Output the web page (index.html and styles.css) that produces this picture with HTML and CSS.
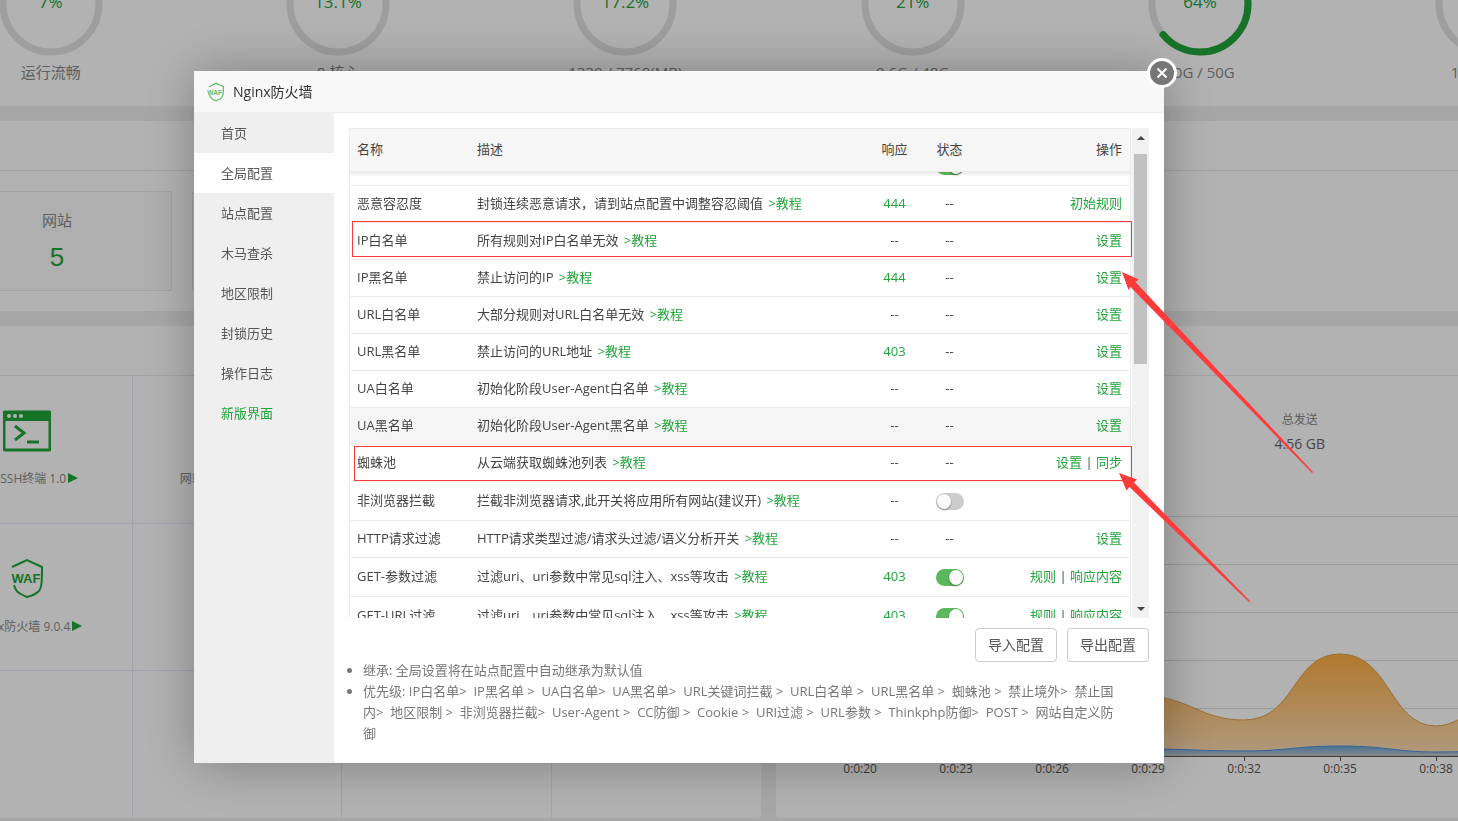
FILE: index.html
```html
<!DOCTYPE html>
<html lang="zh-CN">
<head>
    <meta charset="UTF-8">
    <meta name="viewport" content="width=device-width, initial-scale=1.0">
    <title>Nginx防火墙</title>
    <link rel="stylesheet" href="styles.css">
</head>
<body>
    <div class="dashboard">
        <section class="panel status">
            <div class="gauge">
                <div class="ring">
                    <svg viewBox="0 0 104 104"><circle class="track" cx="52" cy="52" r="48"/></svg>
                    <span>7%</span>
                </div>
                <p>运行流畅</p>
            </div>
            <div class="gauge">
                <div class="ring">
                    <svg viewBox="0 0 104 104"><circle class="track" cx="52" cy="52" r="48"/></svg>
                    <span>13.1%</span>
                </div>
                <p>8 核心</p>
            </div>
            <div class="gauge">
                <div class="ring">
                    <svg viewBox="0 0 104 104"><circle class="track" cx="52" cy="52" r="48"/></svg>
                    <span>17.2%</span>
                </div>
                <p>1339 / 7768(MB)</p>
            </div>
            <div class="gauge">
                <div class="ring">
                    <svg viewBox="0 0 104 104"><circle class="track" cx="52" cy="52" r="48"/></svg>
                    <span>21%</span>
                </div>
                <p>9.6G / 48G</p>
            </div>
            <div class="gauge">
                <div class="ring">
                    <svg viewBox="0 0 104 104">
                        <circle class="track" cx="52" cy="52" r="48"/>
                        <circle class="value" cx="52" cy="52" r="48" pathLength="100" stroke-dasharray="64 100" transform="rotate(-90 52 52)"/>
                    </svg>
                    <span>64%</span>
                </div>
                <p>30G / 50G</p>
            </div>
            <div class="gauge">
                <div class="ring">
                    <svg viewBox="0 0 104 104"><circle class="track" cx="52" cy="52" r="48"/></svg>
                    <span>1%</span>
                </div>
                <p>1.2G / 99G</p>
            </div>
        </section>

        <section class="panel">
            <div class="panel-head"></div>
            <div class="counts">
                <div class="count"><p>网站</p><a href="#">5</a></div>
                <div class="count"></div>
                <div class="count"></div>
                <div class="count"></div>
            </div>
        </section>

        <div class="columns">
            <section class="panel">
                <div class="panel-head"></div>
                <div class="soft-list">
                    <div class="soft">
                        <svg class="soft-icon" viewBox="0 0 48 48">
                            <rect x="1" y="5" width="46" height="38" rx="1" fill="none" stroke="#20a53a" stroke-width="3"/>
                            <path d="M0 4h48v10H0z" fill="#20a53a"/>
                            <circle cx="6" cy="9" r="2" fill="#fff"/>
                            <circle cx="12" cy="9" r="2" fill="#fff"/>
                            <circle cx="18" cy="9" r="2" fill="#fff"/>
                            <path d="M12 19l9 7-9 7M24 35h12" fill="none" stroke="#20a53a" stroke-width="3"/>
                        </svg>
                        <p>宝塔SSH终端 1.0<i class="play"></i></p>
                    </div>
                    <div class="soft">
                        <span class="soft-icon"></span>
                        <p>网站监控报表 6.9.6<i class="play"></i></p>
                    </div>
                    <div class="soft"></div>
                    <div class="soft"></div>
                    <div class="soft">
                        <svg class="soft-icon" viewBox="0 0 48 48">
                            <path d="M9 12l15-7 15 7c0 12 0 20-3 24-3 3-8 5-12 6-5-2-9-4-11-7l-2-5" fill="none" stroke="#20a53a" stroke-width="2"/>
                            <text class="waf-text" x="23" y="28" text-anchor="middle">WAF</text>
                        </svg>
                        <p>Nginx防火墙 9.0.4<i class="play"></i></p>
                    </div>
                    <div class="soft"></div>
                    <div class="soft"></div>
                    <div class="soft"></div>
                    <div class="soft"></div>
                    <div class="soft"></div>
                    <div class="soft"></div>
                    <div class="soft"></div>
                </div>
            </section>

            <section class="panel">
                <div class="panel-head"></div>
                <div class="traffic">
                    <div class="traffic-sent">
                        <p>总发送</p>
                        <strong>4.56 GB</strong>
                    </div>
                </div>
                <svg class="chart" width="855" height="320" viewBox="0 0 855 320">
                    <defs>
                        <linearGradient id="up" x1="0" y1="0" x2="0" y2="1">
                            <stop offset="0" stop-color="#ffad42"/>
                            <stop offset="1" stop-color="#fbdcb4"/>
                        </linearGradient>
                        <linearGradient id="down" x1="0" y1="0" x2="0" y2="1">
                            <stop offset="0" stop-color="#6aa2d6"/>
                            <stop offset="1" stop-color="#c0c6c6"/>
                        </linearGradient>
                    </defs>
                    <path class="grid" d="M0 16.500H855M0 64.500H855M0 112.500H855M0 160.500H855M0 208.500H855"/>
                    <path fill="url(#up)" d="M276 256V215C320 215 340 194 372 196C414 198 425 220 468 220C520 220 516 154 564 154C614 154 614 226 660 226C690 226 710 190 760 180H855V256Z"/>
                    <path class="up-line" d="M276 215C320 215 340 194 372 196C414 198 425 220 468 220C520 220 516 154 564 154C614 154 614 226 660 226C690 226 710 190 760 180H855"/>
                    <path fill="url(#down)" d="M276 256V249H388C420 250 440 251 468 251C510 251 520 246 564 246C610 246 620 252 660 252L855 250V256Z"/>
                    <path class="down-line" d="M276 249H388C420 250 440 251 468 251C510 251 520 246 564 246C610 246 620 252 660 252L855 250"/>
                    <path class="axis" d="M0 256.500H855M84.500 256v5M180.500 256v5M276.500 256v5M372.500 256v5M468.500 256v5M564.500 256v5M660.500 256v5"/>
                    <g class="ticks">
                        <text x="84" y="273">0:0:20</text>
                        <text x="180" y="273">0:0:23</text>
                        <text x="276" y="273">0:0:26</text>
                        <text x="372" y="273">0:0:29</text>
                        <text x="468" y="273">0:0:32</text>
                        <text x="564" y="273">0:0:35</text>
                        <text x="660" y="273">0:0:38</text>
                    </g>
                </svg>
            </section>
        </div>
    </div>

    <div class="mask">
        <div class="modal" role="dialog" aria-label="Nginx防火墙">
            <button class="close" type="button" aria-label="关闭">
                <svg viewBox="0 0 12 12"><path d="M1.500 1.500l9 9M10.500 1.500l-9 9"/></svg>
            </button>
            <div class="modal-title">
                <svg class="title-icon" viewBox="0 0 48 48">
                    <path d="M7 12L24 3l18 8c0 14 0 22-4 26-3 4-9 6-14 8-6-2-11-5-13-9l-2-5" fill="none" stroke="#5cbf70" stroke-width="3"/>
                    <text class="waf-text" x="21" y="30" text-anchor="middle">WAF</text>
                </svg>
                Nginx防火墙
            </div>
            <div class="modal-body">
                <nav class="side">
                    <a href="#">首页</a>
                    <a href="#" class="on">全局配置</a>
                    <a href="#">站点配置</a>
                    <a href="#">木马查杀</a>
                    <a href="#">地区限制</a>
                    <a href="#">封锁历史</a>
                    <a href="#">操作日志</a>
                    <a href="#" class="new">新版界面</a>
                </nav>
                <div class="content">
                    <div class="rules">
                        <div class="rules-scroll">
                            <table>
                                <thead>
                                    <tr>
                                        <th class="name">名称</th>
                                        <th>描述</th>
                                        <th class="code">响应</th>
                                        <th class="state">状态</th>
                                        <th class="ops">操作</th>
                                    </tr>
                                </thead>
                                <tbody>
                                    <tr class="tall">
                                        <td>禁止境外访问</td>
                                        <td>禁止中国大陆以外的地区访问站点</td>
                                        <td class="code"></td>
                                        <td class="state"><input type="checkbox" class="switch" aria-label="禁止境外访问" checked></td>
                                        <td class="ops"></td>
                                    </tr>
                                    <tr>
                                        <td>恶意容忍度</td>
                                        <td>封锁连续恶意请求，请到站点配置中调整容忍阈值 <a href="#">&gt;教程</a></td>
                                        <td class="code"><a href="#">444</a></td>
                                        <td class="state">--</td>
                                        <td class="ops"><a href="#">初始规则</a></td>
                                    </tr>
                                    <tr>
                                        <td>IP白名单</td>
                                        <td>所有规则对IP白名单无效 <a href="#">&gt;教程</a></td>
                                        <td class="code">--</td>
                                        <td class="state">--</td>
                                        <td class="ops"><a href="#">设置</a></td>
                                    </tr>
                                    <tr>
                                        <td>IP黑名单</td>
                                        <td>禁止访问的IP <a href="#">&gt;教程</a></td>
                                        <td class="code"><a href="#">444</a></td>
                                        <td class="state">--</td>
                                        <td class="ops"><a href="#">设置</a></td>
                                    </tr>
                                    <tr>
                                        <td>URL白名单</td>
                                        <td>大部分规则对URL白名单无效 <a href="#">&gt;教程</a></td>
                                        <td class="code">--</td>
                                        <td class="state">--</td>
                                        <td class="ops"><a href="#">设置</a></td>
                                    </tr>
                                    <tr>
                                        <td>URL黑名单</td>
                                        <td>禁止访问的URL地址 <a href="#">&gt;教程</a></td>
                                        <td class="code"><a href="#">403</a></td>
                                        <td class="state">--</td>
                                        <td class="ops"><a href="#">设置</a></td>
                                    </tr>
                                    <tr>
                                        <td>UA白名单</td>
                                        <td>初始化阶段User-Agent白名单 <a href="#">&gt;教程</a></td>
                                        <td class="code">--</td>
                                        <td class="state">--</td>
                                        <td class="ops"><a href="#">设置</a></td>
                                    </tr>
                                    <tr class="hover">
                                        <td>UA黑名单</td>
                                        <td>初始化阶段User-Agent黑名单 <a href="#">&gt;教程</a></td>
                                        <td class="code">--</td>
                                        <td class="state">--</td>
                                        <td class="ops"><a href="#">设置</a></td>
                                    </tr>
                                    <tr>
                                        <td>蜘蛛池</td>
                                        <td>从云端获取蜘蛛池列表 <a href="#">&gt;教程</a></td>
                                        <td class="code">--</td>
                                        <td class="state">--</td>
                                        <td class="ops"><a href="#">设置</a> | <a href="#">同步</a></td>
                                    </tr>
                                    <tr class="tall">
                                        <td>非浏览器拦截</td>
                                        <td>拦截非浏览器请求,此开关将应用所有网站(建议开) <a href="#">&gt;教程</a></td>
                                        <td class="code">--</td>
                                        <td class="state"><input type="checkbox" class="switch" aria-label="非浏览器拦截"></td>
                                        <td class="ops"></td>
                                    </tr>
                                    <tr>
                                        <td>HTTP请求过滤</td>
                                        <td>HTTP请求类型过滤/请求头过滤/语义分析开关 <a href="#">&gt;教程</a></td>
                                        <td class="code">--</td>
                                        <td class="state">--</td>
                                        <td class="ops"><a href="#">设置</a></td>
                                    </tr>
                                    <tr class="tall">
                                        <td>GET-参数过滤</td>
                                        <td>过滤uri、uri参数中常见sql注入、xss等攻击 <a href="#">&gt;教程</a></td>
                                        <td class="code"><a href="#">403</a></td>
                                        <td class="state"><input type="checkbox" class="switch" aria-label="GET-参数过滤" checked></td>
                                        <td class="ops"><a href="#">规则</a> | <a href="#">响应内容</a></td>
                                    </tr>
                                    <tr class="tall">
                                        <td>GET-URL过滤</td>
                                        <td>过滤uri、uri参数中常见sql注入、xss等攻击 <a href="#">&gt;教程</a></td>
                                        <td class="code"><a href="#">403</a></td>
                                        <td class="state"><input type="checkbox" class="switch" aria-label="GET-URL过滤" checked></td>
                                        <td class="ops"><a href="#">规则</a> | <a href="#">响应内容</a></td>
                                    </tr>
                                </tbody>
                            </table>
                        </div>
                        <div class="scrollbar">
                            <i class="arrow-up"></i>
                            <div class="thumb"></div>
                            <i class="arrow-down"></i>
                        </div>
                    </div>
                    <div class="actions">
                        <button type="button">导入配置</button>
                        <button type="button">导出配置</button>
                    </div>
                    <ul class="tips">
                        <li>继承: 全局设置将在站点配置中自动继承为默认值</li>
                        <li>优先级: IP白名单&gt;&nbsp; IP黑名单 &gt;&nbsp; UA白名单&gt;&nbsp; UA黑名单&gt;&nbsp; URL关键词拦截 &gt;&nbsp; URL白名单 &gt;&nbsp; URL黑名单 &gt;&nbsp; 蜘蛛池 &gt;&nbsp; 禁止境外&gt;&nbsp; 禁止国内&gt;&nbsp; 地区限制 &gt;&nbsp; 非浏览器拦截&gt;&nbsp; User-Agent &gt;&nbsp; CC防御 &gt;&nbsp; Cookie &gt;&nbsp; URI过滤 &gt;&nbsp; URL参数 &gt;&nbsp; Thinkphp防御&gt;&nbsp; POST &gt;&nbsp; 网站自定义防御</li>
                    </ul>
                </div>
            </div>
        </div>
    </div>

    <!-- red marks over the dialog -->
    <svg class="marks" width="1458" height="821" viewBox="0 0 1458 821">
        <rect x="352.500" y="221.500" width="779" height="35"/>
        <rect x="354.500" y="446.500" width="777" height="34"/>
        <path d="M1122 272L1139 279.500L1135.500 282L1313 472L1312 473L1130.500 287L1128.500 290Z"/>
        <path d="M1119 473L1137 479.500L1134 482.500L1250 601L1249 602L1129.500 487L1126.500 490.500Z"/>
    </svg>

    <script>
        document.querySelector('.rules-scroll').scrollTop = 25;
    </script>
</body>
</html>
```
FILE: styles.css
```css
* {
    box-sizing: border-box;
}
body {
    margin: 0;
    height: 100vh;
    overflow: hidden;
    background: #f0f0f0;
    color: #444;
    font-family: "Open Sans", "Noto Sans CJK SC", sans-serif;
    font-size: 13px;
    line-height: 20px;
}
p, ul {
    margin: 0;
}
a {
    color: #20a53a;
    text-decoration: none;
}

/* dashboard behind the dialog, scrolled a little */
.dashboard {
    display: grid;
    gap: 15px;
    margin: -48px -173px 0 -93px;
}
.panel {
    background: #fff;
    border-radius: 4px;
}
.panel-head {
    height: 50px;
    border-bottom: 1px solid #e8e8e8;
}
.status {
    display: grid;
    grid-template-columns: repeat(6, 1fr);
    padding-bottom: 24px;
    text-align: center;
}
.gauge p {
    margin-top: 6px;
    font-size: 15px;
    color: #888;
}
.ring {
    display: grid;
    place-items: center;
    height: 104px;
}
.ring svg, .ring span {
    grid-area: 1 / 1;
}
.ring svg {
    width: 104px;
}
.ring span {
    padding-bottom: 4px;
    font-size: 17px;
    color: #20a53a;
}
.ring circle {
    fill: none;
    stroke-width: 7;
}
.track {
    stroke: #e3e3e3;
}
.value {
    stroke: #20a53a;
    stroke-linecap: round;
}
.counts {
    display: grid;
    grid-template-columns: repeat(4, 230px);
    gap: 20px;
    padding: 20px 35px;
}
.count {
    height: 100px;
    padding-top: 18px;
    border: 1px solid #e8e8e8;
    border-radius: 2px;
    background: #fbfbfb;
    text-align: center;
}
.count p {
    font-size: 15px;
    color: #888;
}
.count a {
    display: block;
    margin-top: 12px;
    font: 26px/30px "Liberation Sans", sans-serif;
}
.columns {
    display: grid;
    grid-template-columns: 1fr 1fr;
    gap: 15px;
}
.soft-list {
    display: grid;
    grid-template-columns: repeat(4, 1fr);
    grid-template-rows: 148px 147px 147px;
    padding-left: 16px;
}
.soft {
    padding-top: 31px;
    border-right: 1px solid #e9e9fa;
    border-bottom: 1px solid #e9e9fa;
    text-align: center;
    font-size: 12px;
    color: #888;
}
.soft:nth-child(4n) {
    border-right: none;
}
.soft:nth-child(n+9) {
    border-bottom: none;
}
.soft-icon {
    display: block;
    width: 48px;
    height: 48px;
    margin: 0 auto 14px;
}
.soft p {
    white-space: nowrap;
}
.play {
    display: inline-block;
    margin-left: 2px;
    border-left: 10px solid #20a53a;
    border-top: 5px solid transparent;
    border-bottom: 5px solid transparent;
}
.waf-text {
    font: bold 13px "Liberation Sans", sans-serif;
    fill: #20a53a;
}
.traffic {
    display: grid;
    grid-template-columns: repeat(4, 1fr);
    padding: 34px 26px 0 15px;
    text-align: center;
    color: #888;
    font-size: 12px;
}
.traffic-sent {
    grid-column: 3;
}
.traffic strong {
    display: block;
    margin-top: 4px;
    font-size: 14px;
    font-weight: normal;
    color: #666;
}
.chart {
    display: block;
    height: 320px;
    margin-top: 46px;
    margin-bottom: -2px;
}
.grid {
    stroke: #dcdcdc;
}
.up-line, .down-line {
    fill: none;
    stroke: #dca048;
}
.down-line {
    stroke: #4a90e2;
}
.axis {
    stroke: #555;
}
.ticks {
    font-size: 12px;
    fill: #555;
    text-anchor: middle;
}

/* dialog */
.mask {
    position: fixed;
    inset: 0;
    display: flex;
    align-items: flex-start;
    padding: 71px 294px 0 194px;
    background: rgba(0, 0, 0, 0.3);
}
.modal {
    position: relative;
    flex: 1;
    min-width: 0;
    background: #fff;
    box-shadow: 1px 1px 50px rgba(0, 0, 0, 0.3);
}
.close {
    position: absolute;
    top: -13px;
    right: -13px;
    display: grid;
    place-items: center;
    width: 30px;
    height: 30px;
    padding: 0;
    border: 3px solid #fff;
    border-radius: 50%;
    background: #777;
}
.close svg {
    width: 12px;
    stroke: #fff;
    stroke-width: 2;
}
.modal-title {
    display: flex;
    align-items: center;
    gap: 7px;
    height: 42px;
    padding-left: 12px;
    border-bottom: 1px solid #eee;
    background: #f8f8f8;
    font-size: 14px;
    color: #333;
}
.title-icon {
    width: 20px;
    height: 20px;
}
.title-icon .waf-text {
    font-size: 16px;
    fill: #5cbf70;
}
.modal-body {
    display: flex;
}
.side {
    flex: 0 0 140px;
    background: #efefef;
}
.side a {
    display: block;
    padding-left: 27px;
    line-height: 40px;
    color: #555;
}
.side .on {
    background: #fff;
}
.side .new {
    color: #20a53a;
}
.content {
    flex: 1;
    min-width: 0;
    padding: 15px 15px 19px;
}
.rules {
    display: flex;
    height: 490px;
}
.rules-scroll {
    flex: 1;
    overflow: hidden;
    padding-right: 1px;
}
table {
    width: 100%;
    table-layout: fixed;
    border-collapse: separate;
    border-spacing: 0;
}
th, td {
    padding: 7px 8px 9px;
    border-bottom: 1px solid #ebebeb;
    text-align: left;
    white-space: nowrap;
}
thead {
    position: sticky;
    top: 0;
    z-index: 1;
    box-shadow: 0 3px 3px rgba(0, 0, 0, 0.08);
}
th {
    height: 44px;
    border-top: 1px solid #ebebeb;
    background: #f6f6f6;
    font-weight: normal;
}
td {
    height: 37px;
}
.tall td {
    height: 39px;
}
.hover td {
    background: #f5f5f5;
}
th:first-child, td:first-child {
    padding-left: 7px;
    border-left: 1px solid #ebebeb;
}
th:last-child, td:last-child {
    border-right: 1px solid #ebebeb;
}
td:nth-child(2) a {
    margin-left: 2px;
}
.name {
    width: 120px;
}
th.code, th.state, td.code, td.state {
    width: 55px;
    padding-left: 0;
    padding-right: 0;
    text-align: center;
}
th.ops, td.ops {
    width: 154px;
    text-align: right;
}
.switch {
    appearance: none;
    display: block;
    width: 28px;
    height: 17px;
    margin: 2px auto 0;
    border-radius: 9px;
    background: #ccc;
}
.switch::before {
    content: "";
    display: block;
    width: 14px;
    height: 15px;
    margin: 1px;
    border-radius: 50%;
    background: #fafafa;
    box-shadow: 0 1px 2px rgba(0, 0, 0, 0.4);
}
.switch:checked {
    background: #5cb85c;
}
.switch:checked::before {
    margin-left: 13px;
}
.scrollbar {
    display: flex;
    flex-direction: column;
    align-items: center;
    width: 17px;
    padding: 8px 0 7px;
    background: #f1f1f1;
}
.arrow-up, .arrow-down {
    border: 4px solid transparent;
}
.arrow-up {
    border-top: none;
    border-bottom-color: #444;
}
.arrow-down {
    margin-top: auto;
    border-bottom: none;
    border-top-color: #444;
}
.thumb {
    width: 13px;
    height: 210px;
    margin-top: 14px;
    background: #c1c1c1;
}
.actions {
    display: flex;
    justify-content: flex-end;
    gap: 10px;
    height: 32px;
    margin-top: 10px;
}
.actions button {
    width: 82px;
    height: 34px;
    padding: 0;
    border: 1px solid #ccc;
    border-radius: 4px;
    background: #fff;
    color: #555;
    font: inherit;
    font-size: 14px;
}
.tips {
    padding: 0 25px 0 14px;
    line-height: 21px;
    color: #777;
}

.marks {
    position: fixed;
    top: 0;
    left: 0;
    pointer-events: none;
    fill: #ff3b3b;
}
.marks rect {
    fill: none;
    stroke: #f83a3a;
}
```
